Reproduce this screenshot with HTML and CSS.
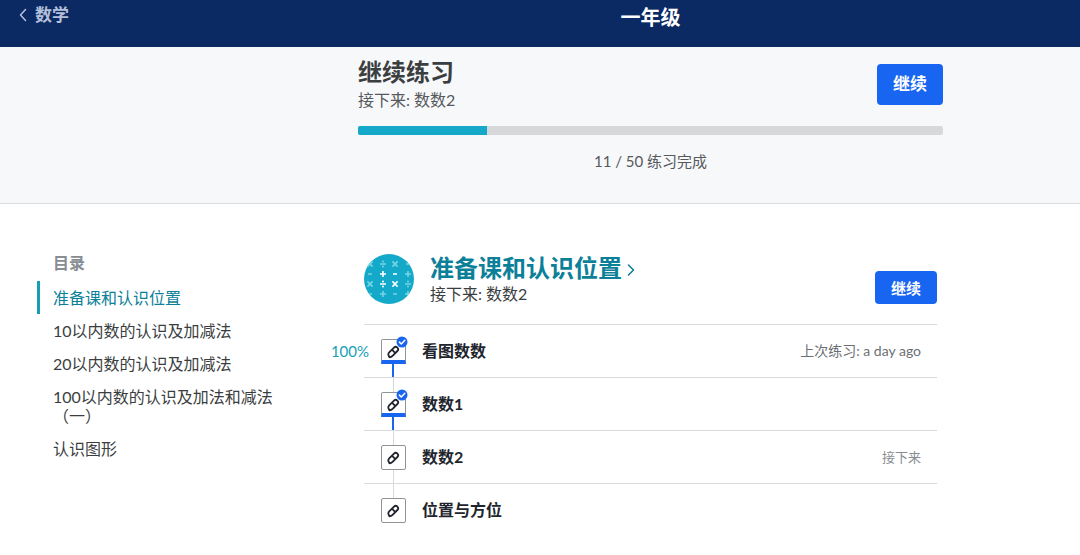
FILE: index.html
```html
<!DOCTYPE html>
<html lang="zh-CN">
<head>
<meta charset="utf-8">
<meta name="viewport" content="width=device-width, initial-scale=1">
<title>一年级</title>
<link rel="stylesheet" href="styles.css">
</head>
<body>
<svg class="defs" width="0" height="0" aria-hidden="true">
  <symbol id="pencil" viewBox="0 0 14 14">
    <path transform="rotate(-45 7 7)" d="M0.8 8.2 L1.6 5.8 Q2.6 4.6 4 4.6 H10.8 a2.4 2.4 0 0 1 0 4.8 H4 Q2 9.4 0.8 8.2 Z M7.9 4.6 V9.4" fill="none" stroke="currentColor" stroke-width="1.8" stroke-linejoin="round"/>
  </symbol>
  <symbol id="tick" viewBox="0 0 12 12">
    <circle cx="6" cy="6" r="5.5" fill="#1865f2"/>
    <path d="M3.4 6.1 L5.3 8 L8.8 4.3" fill="none" stroke="#fff" stroke-width="1.5" stroke-linecap="round" stroke-linejoin="round"/>
  </symbol>
  <symbol id="plus" viewBox="-4 -4 8 8"><path d="M-3 0H3M0 -3V3" stroke="currentColor" stroke-width="1.6"/></symbol>
  <symbol id="minus" viewBox="-4 -4 8 8"><path d="M-2 0H2" stroke="currentColor" stroke-width="1.6"/></symbol>
  <symbol id="times" viewBox="-4 -4 8 8"><path d="M-2.6 -2.6L2.6 2.6M-2.6 2.6L2.6 -2.6" stroke="currentColor" stroke-width="1.6"/></symbol>
  <symbol id="divide" viewBox="-4 -4 8 8"><path d="M-3 0H3" stroke="currentColor" stroke-width="1.4"/><circle cy="-2.5" r="1" fill="currentColor"/><circle cy="2.5" r="1" fill="currentColor"/></symbol>
</svg>

<header class="topbar">
  <a class="back" href="#">
    <svg class="back-icon" viewBox="0 0 8 14" aria-hidden="true"><path d="M6.5 1.5 L1.5 7 L6.5 12.5" fill="none" stroke="currentColor" stroke-width="1.5" stroke-linecap="round" stroke-linejoin="round"/></svg>
    数学
  </a>
  <h1 class="topbar-title">一年级</h1>
</header>

<section class="hero">
  <div class="hero-inner">
    <div class="hero-head">
      <div>
        <h2 class="hero-title">继续练习</h2>
        <p class="hero-next">接下来: 数数2</p>
      </div>
      <button class="button button-large" type="button">继续</button>
    </div>
    <div class="progress" role="progressbar" aria-valuenow="11" aria-valuemin="0" aria-valuemax="50" aria-labelledby="progress-text"><div class="progress-fill" style="width:22%"></div></div>
    <p class="progress-text" id="progress-text">11 / 50 练习完成</p>
  </div>
</section>

<div class="content">
  <nav class="toc" aria-labelledby="toc-title">
    <h2 class="toc-title" id="toc-title">目录</h2>
    <a class="toc-link current" href="#unit">准备课和认识位置</a>
    <a class="toc-link" href="#">10以内数的认识及加减法</a>
    <a class="toc-link" href="#">20以内数的认识及加减法</a>
    <a class="toc-link" href="#">100以内数的认识及加法和减法（一）</a>
    <a class="toc-link" href="#">认识图形</a>
  </nav>

  <main class="unit" id="unit">
    <div class="unit-head">
      <svg class="unit-icon" viewBox="0 0 50 50" aria-hidden="true">
        <clipPath id="disc"><circle cx="25" cy="25" r="25"/></clipPath>
        <circle cx="25" cy="25" r="25" fill="#14a9c9"/>
        <g clip-path="url(#disc)">
          <g color="#76d5e6">
            <use href="#times" x="2" y="6" width="8" height="8"/>
            <use href="#divide" x="15" y="6" width="8" height="8"/>
            <use href="#times" x="27" y="6" width="8" height="8"/>
            <use href="#minus" x="40" y="6" width="8" height="8"/>
            <use href="#minus" x="2" y="16" width="8" height="8"/>
            <use href="#plus" x="40" y="16" width="8" height="8"/>
            <use href="#times" x="2" y="26" width="8" height="8"/>
            <use href="#divide" x="40" y="26" width="8" height="8"/>
            <use href="#minus" x="2" y="36" width="8" height="8"/>
            <use href="#plus" x="15" y="36" width="8" height="8"/>
            <use href="#minus" x="27" y="36" width="8" height="8"/>
            <use href="#plus" x="40" y="36" width="8" height="8"/>
          </g>
          <g color="#fff">
            <use href="#plus" x="15" y="16" width="8" height="8"/>
            <use href="#minus" x="27" y="16" width="8" height="8"/>
            <use href="#divide" x="15" y="26" width="8" height="8"/>
            <use href="#times" x="27" y="26" width="8" height="8"/>
          </g>
        </g>
      </svg>
      <div class="unit-text">
        <h2 class="unit-title"><a class="unit-link" href="#">准备课和认识位置<svg class="unit-arrow" viewBox="0 0 8 14" aria-hidden="true"><path d="M1.5 2 L6.5 7 L1.5 12" fill="none" stroke="currentColor" stroke-width="1.6" stroke-linecap="round" stroke-linejoin="round"/></svg></a></h2>
        <p class="unit-next">接下来: 数数2</p>
      </div>
      <button class="button" type="button">继续</button>
    </div>

    <ul class="tasks">
      <li class="task">
        <span class="score">100%</span>
        <span class="track"><span class="line blank"></span><span class="box done"><svg class="pencil"><use href="#pencil"/></svg><svg class="tick"><use href="#tick"/></svg></span><span class="line active"></span></span>
        <a class="task-name" href="#">看图数数</a>
        <span class="task-note">上次练习: a day ago</span>
      </li>
      <li class="task">
        <span class="track"><span class="line"></span><span class="box done"><svg class="pencil"><use href="#pencil"/></svg><svg class="tick"><use href="#tick"/></svg></span><span class="line active"></span></span>
        <a class="task-name" href="#">数数1</a>
      </li>
      <li class="task">
        <span class="track"><span class="line"></span><span class="box"><svg class="pencil"><use href="#pencil"/></svg></span><span class="line"></span></span>
        <a class="task-name" href="#">数数2</a>
        <span class="task-note upcoming">接下来</span>
      </li>
      <li class="task">
        <span class="track"><span class="line"></span><span class="box"><svg class="pencil"><use href="#pencil"/></svg></span><span class="line blank"></span></span>
        <a class="task-name" href="#">位置与方位</a>
      </li>
    </ul>
  </main>
</div>
</body>
</html>
```

FILE: styles.css
```css
* { box-sizing: border-box; }

body {
  margin: 0;
  background: #fff;
  color: #21242c;
  font: 16px/20px Lato, "Noto Sans CJK SC", sans-serif;
}

h1, h2, p, ul { margin: 0; padding: 0; }
a { color: inherit; text-decoration: none; }
.defs { position: absolute; }

.topbar {
  display: grid;
  grid-template-columns: 221px 1fr;
  align-items: start;
  height: 47px;
  background: #0b2962;
  color: #fff;
}

.back {
  display: flex;
  align-items: center;
  gap: 8px;
  padding: 5px 0 0 19px;
  color: #b5c1dc;
  font-size: 17px;
  font-weight: 700;
}

.back-icon { width: 8px; height: 14px; }

.topbar-title {
  padding-top: 7px;
  text-align: center;
  font-size: 20px;
  line-height: 20px;
}

.hero {
  padding: 9px 0 32px 221px;
  background: #f7f8fa;
  border-bottom: 1px solid #dcdee1;
}

.hero-inner { max-width: 585px; margin: 0 auto; }

.hero-head {
  display: flex;
  align-items: center;
  justify-content: space-between;
}

.hero-title {
  color: #3b3e40;
  font-size: 24px;
  line-height: 32px;
}

.hero-next { font-size: 16px; line-height: 24px; color: #55585c; }

.button {
  height: 33px;
  padding: 0 16px;
  border: 0;
  border-radius: 4px;
  background: #1865f2;
  color: #fff;
  font: 700 15px/20px Lato, "Noto Sans CJK SC", sans-serif;
}

.button-large {
  height: 41px;
  font-size: 17px;
}

.progress {
  height: 9px;
  margin-top: 14px;
  border-radius: 2px;
  background: #d6d8da;
  overflow: hidden;
}

.progress-fill { height: 100%; background: #14a9c9; }

.progress-text {
  margin-top: 16px;
  text-align: center;
  color: #55585c;
  font-size: 15px;
}

.content { display: flex; }

.toc {
  flex: none;
  width: 290px;
  padding: 49px 16px 0 37px;
}

.toc-title {
  padding: 0 16px 8px;
  color: #888d93;
  font-size: 16px;
  line-height: 20px;
}

.toc-link {
  display: block;
  padding: 7px 0 7px 13px;
  border-left: 3px solid transparent;
  color: #3b3e40;
  line-height: 19px;
}

.toc-link.current { border-color: #14a0b4; color: #0c7f99; }

.unit { flex: 1; padding: 49px 143px 24px 74px; }

.unit-head {
  display: flex;
  align-items: center;
  height: 71px;
  padding-bottom: 20px;
}

.unit-icon { flex: none; width: 50px; height: 50px; }

.unit-text { flex: 1; padding: 2px 0 0 16px; }

.unit-title {
  color: #0c7f99;
  font-size: 24px;
  line-height: 28px;
}

.unit-link { display: flex; align-items: center; gap: 5px; }
.unit-arrow { width: 8px; height: 14px; margin-top: 4px; }
.unit-next { line-height: 24px; color: #3b3e40; }
.unit-head .button { align-self: flex-end; }

.tasks { list-style: none; }

.task {
  position: relative;
  display: flex;
  align-items: center;
  height: 53px;
  padding: 0 16px;
  border-top: 1px solid #d8dadc;
}

.score {
  position: absolute;
  right: 100%;
  margin-right: -5px;
  color: #14a0b4;
  font-size: 15px;
}

.track {
  display: flex;
  flex-direction: column;
  align-items: center;
  align-self: stretch;
  width: 26px;
  margin-right: 16px;
}

.line { flex: 1; width: 1px; background: #d6d8da; }
.line.active { width: 2px; background: #1865f2; }
.line.blank { background: none; }

.box {
  position: relative;
  display: flex;
  align-items: center;
  justify-content: center;
  width: 25px;
  height: 25px;
  padding-top: 2px;
  border: 1px solid #909499;
  border-radius: 2px;
}

.box.done { border-bottom: 4px solid #1865f2; padding-top: 5px; border-radius: 2px 2px 0 0; }
.pencil { width: 14px; height: 14px; }

.tick {
  position: absolute;
  top: -4px;
  right: -3px;
  width: 12px;
  height: 12px;
}

.task-name { flex: 1; font-weight: 700; }
.task-note { color: #6b6f75; font-size: 14px; }
.task-note.upcoming { color: #888d93; font-size: 13px; }
```
